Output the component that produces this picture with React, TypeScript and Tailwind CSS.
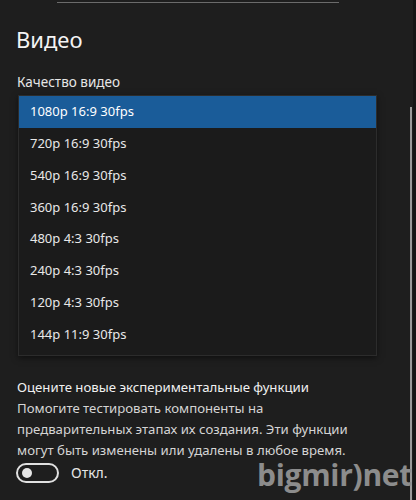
const qualities = [
  '1080p 16:9 30fps',
  '720p 16:9 30fps',
  '540p 16:9 30fps',
  '360p 16:9 30fps',
  '480p 4:3 30fps',
  '240p 4:3 30fps',
  '120p 4:3 30fps',
  '144p 11:9 30fps',
]

export default function App() {
  const selected = 0

  return (
    <div
      className="relative w-[416px] h-[500px] overflow-hidden bg-[#1e1e1e] text-[#f2f2f2]"
      style={{ fontFamily: '"Noto Sans", "Open Sans", sans-serif' }}
    >
      {/* верхний разделитель */}
      <div className="ml-[57px] mt-[2px] w-[282px] h-px bg-[#6b6b6b]" />

      <div className="pl-[16px]">
        <h1 className="mt-[21px] text-[22px] leading-[30px] font-normal text-[#f4f4f4]">Видео</h1>

        <p className="mt-[19px] text-[13.5px] leading-[18px] text-[#e6e6e6] pl-px">Качество видео</p>

        {/* выпадающий список */}
        <div className="mt-[4px] ml-[2px] w-[359px] border border-[#2c2c2c] bg-[#1b1b1b] shadow-[0_2px_6px_rgba(0,0,0,0.5)]">
          {qualities.map((q, i) => (
            <div
              key={q}
              className={`h-[31.8px] flex items-center pl-[11px] text-[13px] ${
                i === selected ? 'bg-[#1a5c99] text-white' : 'text-[#e8e8e8]'
              }`}
            >
              {q}
            </div>
          ))}
          <div className="h-[5px]" />
        </div>

        {/* экспериментальные функции */}
        <div className="mt-[21px] pl-px text-[13.2px] leading-[21px] whitespace-nowrap">
          <p className="text-[#f0f0f0]">Оцените новые экспериментальные функции</p>
          <p className="text-[#d4d4d4]">
            Помогите тестировать компоненты на
            <br />
            предварительных этапах их создания. Эти функции
            <br />
            могут быть изменены или удалены в любое время.
          </p>
        </div>

        <div className="mt-[1px] flex items-center gap-[12px]">
          <div className="w-[43px] h-[20px] rounded-full border-2 border-[#e0e0e0] flex items-center pl-[4px]">
            <div className="w-[10px] h-[10px] rounded-full bg-[#e6e6e6]" />
          </div>
          <span className="text-[14px] text-[#e6e6e6]">Откл.</span>
        </div>
      </div>

      {/* полоса прокрутки */}
      <div className="absolute right-[4px] top-[107px] bottom-0 w-[2px] bg-[#9a9a9a]" />
      <div className="absolute right-0 top-0 bottom-0 w-[3px] bg-[#151515]" />

      {/* водяной знак */}
      <div
        className="absolute left-[257px] top-[459px] text-[30px] leading-[32px] font-bold text-[#8c8c8c] tracking-[-0.3px]"
        style={{ fontFamily: '"Open Sans", sans-serif' }}
      >
        bigmir)net
      </div>
    </div>
  )
}
